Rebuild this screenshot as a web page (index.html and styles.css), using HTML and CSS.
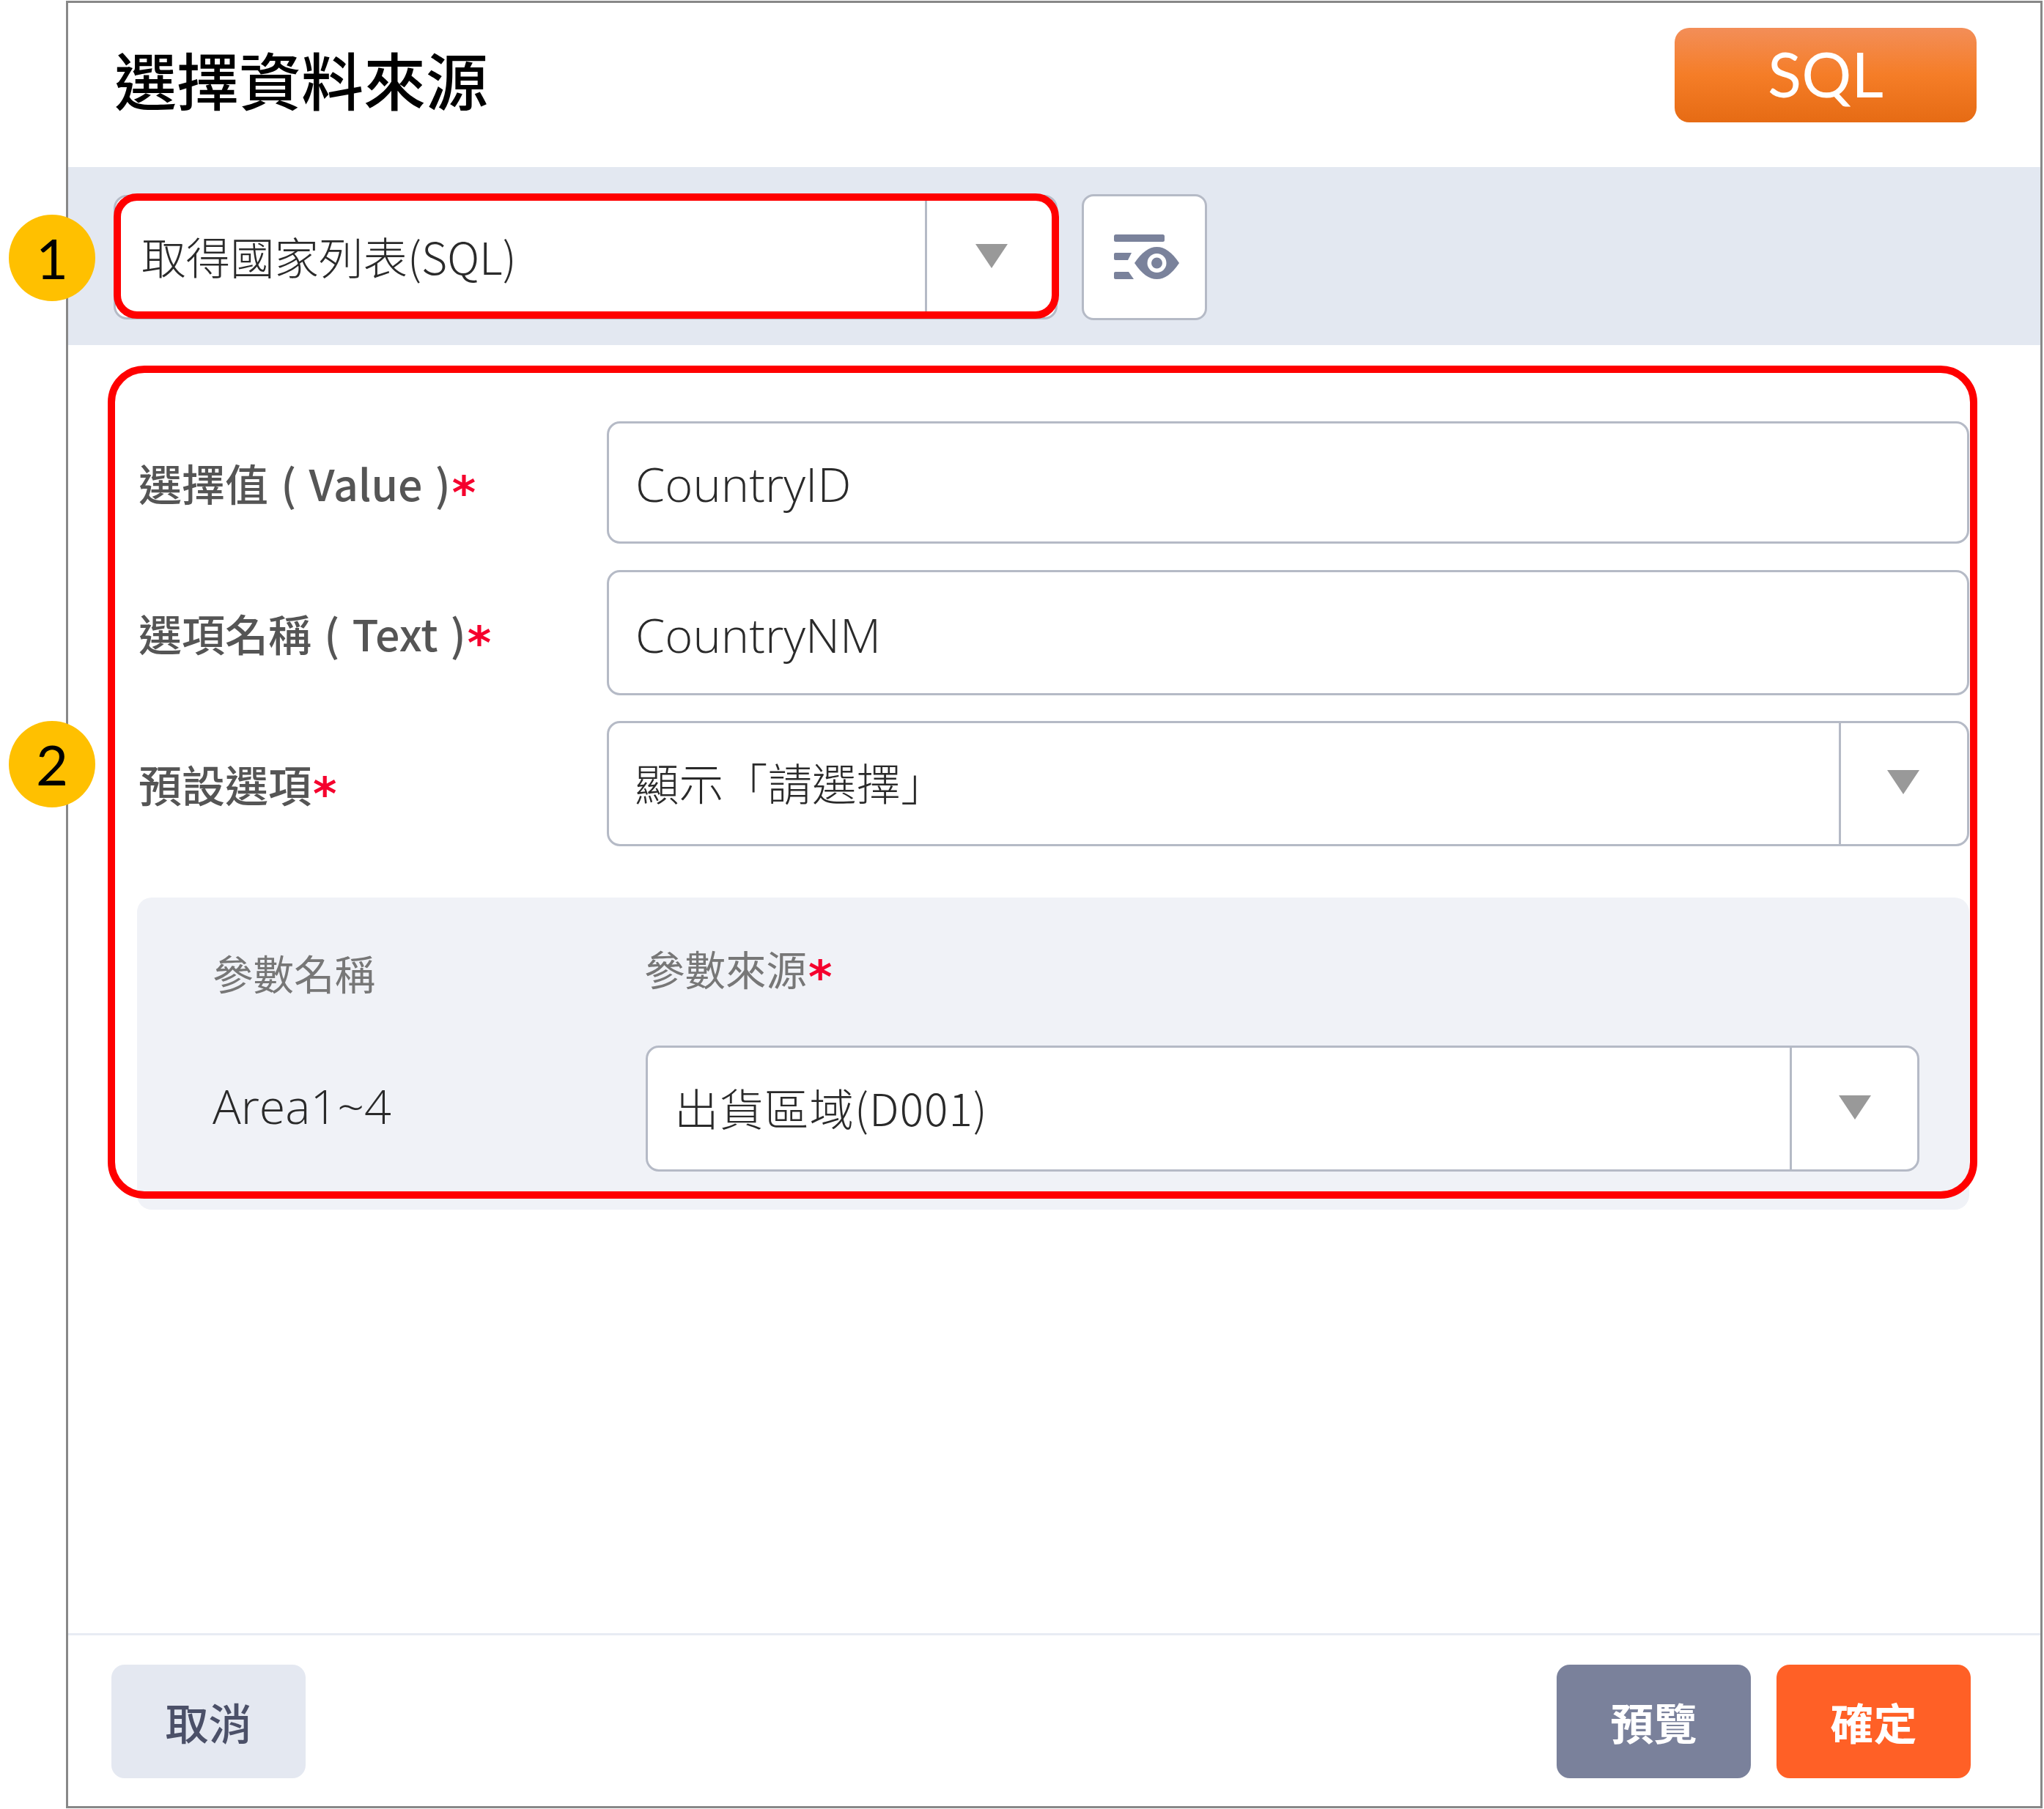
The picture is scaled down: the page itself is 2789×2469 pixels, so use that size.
FILE: index.html

```html
<!DOCTYPE html>
<html lang="zh-Hant">
<head>
    <meta charset="UTF-8">
    <meta name="viewport" content="width=device-width, initial-scale=1.0">
    <title>選擇資料來源</title>

    <link rel="stylesheet" href="styles.css">
</head>
<body>

    <div class="dialog">

        <div class="dialog-head">
            <h1 class="dialog-title">選擇資料來源</h1>
            <div class="sql-tag">SQL</div>
        </div>

        <div class="source-bar">
            <div class="select select-source">
                <span class="select-text">取得國家列表(SQL)</span>
                <span class="select-arrow"><i class="caret"></i></span>
            </div>
            <button class="eye-btn" type="button">
                <svg class="eye-icon" viewBox="0 0 89 61" width="89" height="61">
                    <rect x="0" y="0" width="69" height="10" rx="2.5" fill="#7a829b"/>
                    <path d="M2 25H24L19 35H2Q0 35 0 33V27Q0 25 2 25Z" fill="#7a829b"/>
                    <path d="M2 51H20L27 61H2Q0 61 0 59V53Q0 51 2 51Z" fill="#7a829b"/>
                    <path d="M28 39C38 24 48 17 58.5 17C69 17 79 24 89 39C79 54 69 61 58.5 61C48 61 38 54 28 39Z" fill="#7a829b"/>
                    <circle cx="58.5" cy="39" r="13" fill="#fff"/>
                    <circle cx="58.5" cy="39" r="7.5" fill="#7a829b"/>
                </svg>
            </button>
        </div>

        <div class="form">
            <div class="row row-first">
                <label class="row-label">選擇值 ( Value )<span class="req">*</span></label>
                <div class="input">CountryID</div>
            </div>
            <div class="row">
                <label class="row-label">選項名稱 ( Text )<span class="req">*</span></label>
                <div class="input input-text">CountryNM</div>
            </div>
            <div class="row">
                <label class="row-label">預設選項<span class="req">*</span></label>
                <div class="select select-default">
                    <span class="select-text">顯示「請選擇」</span>
                    <span class="select-arrow"><i class="caret"></i></span>
                </div>
            </div>

            <div class="params">
                <div class="param-name">參數名稱</div>
                <div class="param-source">參數來源<span class="req">*</span></div>
                <div class="param-value">Area1~4</div>
                <div class="select select-param">
                    <span class="select-text">出貨區域(D001)</span>
                    <span class="select-arrow"><i class="caret"></i></span>
                </div>
            </div>
        </div>

        <div class="dialog-foot">
            <button class="btn btn-cancel" type="button">取消</button>
            <div class="foot-right">
                <button class="btn btn-preview" type="button">預覽</button>
                <button class="btn btn-ok" type="button">確定</button>
            </div>
        </div>

        <!-- callouts drawn over the dialog -->
        <div class="mark mark-source"></div>
        <div class="mark mark-form"></div>
        <div class="badge badge-one">1</div>
        <div class="badge badge-two">2</div>
    </div>

</body>
</html>
```

FILE: styles.css

```css
body{
    margin: 0;
    background: #fff;
    font-family: "Noto Sans CJK TC", sans-serif;
    color: #444;
}

.dialog{
    position: relative;
    display: flex;
    flex-direction: column;
    box-sizing: border-box;
    width: 2697px;
    height: 2467px;
    margin: 1px 0 0 90px;
    border: 3px solid #888;
    background: #fff;
}

/* head */
.dialog-head{
    display: flex;
    justify-content: space-between;
    align-items: flex-start;
    box-sizing: border-box;
    height: 224px;
    padding: 34px 87px 0 63px;
}
.dialog-title{
    margin: 4px 0 0;
    font-size: 85px;
    line-height: 129px;
    font-weight: 500;
    color: #000;
}
.sql-tag{
    width: 412px;
    height: 129px;
    border-radius: 20px;
    background: linear-gradient(#f38e58, #f57d27 50%, #e66b14);
    color: #fff;
    font-family: Lato, sans-serif;
    font-size: 85px;
    line-height: 125px;
    text-align: center;
}

/* source bar */
.source-bar{
    display: flex;
    gap: 33px;
    box-sizing: border-box;
    height: 243px;
    padding: 38px 0 0 62px;
    background: #e3e8f1;
}
.eye-btn{
    display: flex;
    align-items: center;
    justify-content: center;
    box-sizing: border-box;
    width: 171px;
    height: 172px;
    margin-top: -1px;
    padding: 0 0 2px 5px;
    border: 3px solid #b5bac6;
    border-radius: 16px;
    background: #fff;
}

/* select + input */
.select{
    display: flex;
    box-sizing: border-box;
    border: 3px solid #b5bac6;
    border-radius: 18px;
    background: #fff;
}
.select-text{
    flex: 1;
    align-self: center;
    padding: 0 0 5px 35px;
    font-size: 60.5px;
    font-weight: 300;
    line-height: 80px;
    color: #2a2a2a;
}
.select-arrow{
    display: flex;
    align-items: center;
    justify-content: center;
    box-sizing: border-box;
    border-left: 3px solid #b5bac6;
}
.caret{
    display: block;
    margin-top: -4px;
    border-top: 33px solid #999;
    border-left: 22px solid transparent;
    border-right: 22px solid transparent;
}
.select-source{
    width: 1288px;
    height: 170px;
}
.select-source .select-arrow{
    width: 178px;
}
.select-default{
    flex: 1;
}
.select-default .select-arrow{
    width: 175px;
    padding-right: 3px;
}
.select-param{
    height: 172px;
}
.select-param .select-text{
    padding-left: 36px;
    letter-spacing: 1px;
}
.select-param .select-arrow{
    width: 174px;
}
.input{
    flex: 1;
    box-sizing: border-box;
    padding-left: 36px;
    border: 3px solid #b5bac6;
    border-radius: 18px;
    font-family: "Open Sans", "Noto Sans CJK TC", sans-serif;
    font-size: 65px;
    font-weight: 300;
    line-height: 164px;
    color: #2a2a2a;
}
.input-text{
    line-height: 170px;
}

/* form rows */
.form{
    padding: 104px 97px 0 96px;
}
.row{
    display: flex;
    height: 171px;
    margin-bottom: 35px;
}
.row-first{
    height: 167px;
    margin-bottom: 36px;
}
.row-label{
    display: block;
    width: 639px;
    align-self: center;
    font-size: 59px;
    font-weight: 500;
    word-spacing: 4px;
    color: #555;
}
.req{
    margin-left: 2px;
    font-family: "DejaVu Sans", sans-serif;
    font-size: 62px;
    font-weight: 700;
    line-height: 0;
    vertical-align: -10px;
    color: #f5002d;
}

/* params panel */
.params{
    display: grid;
    grid-template-columns: 591px 1fr;
    grid-template-rows: 202px 172px;
    box-sizing: border-box;
    height: 426px;
    margin: 70px 0 0 -2px;
    padding-left: 103px;
    padding-right: 68px;
    border-radius: 20px;
    background: #f0f2f7;
}
.param-name{
    padding-top: 66px;
    font-size: 55.5px;
    line-height: 72px;
    color: #777;
}
.param-source{
    padding-top: 60px;
    margin-left: -2px;
    font-size: 55.5px;
    line-height: 72px;
    color: #777;
}
.param-value{
    align-self: center;
    padding-bottom: 8px;
    font-family: "Open Sans", sans-serif;
    font-size: 64.5px;
    font-weight: 300;
    color: #2a2a2a;
}

/* footer */
.dialog-foot{
    display: flex;
    justify-content: space-between;
    box-sizing: border-box;
    margin-top: auto;
    height: 236px;
    padding: 40px 95px 0 59px;
    border-top: 3px solid #e8ebf3;
}
.foot-right{
    display: flex;
    gap: 35px;
}
.btn{
    width: 265px;
    height: 155px;
    border: 0;
    border-radius: 18px;
    font-family: "Noto Sans CJK TC", sans-serif;
    font-size: 59px;
}
.btn-cancel{
    background: #e4e8f1;
    color: #4b5068;
    font-weight: 500;
}
.btn-preview{
    background: #7a819b;
    color: #fff;
    font-weight: 700;
}
.btn-ok{
    background: #ff6026;
    color: #fff;
    font-weight: 700;
}

/* callouts */
.mark{
    position: absolute;
    box-sizing: border-box;
    border: 10px solid #f00;
}
.mark-source{
    left: 62px;
    top: 260px;
    width: 1290px;
    height: 171px;
    border-radius: 32px;
}
.mark-form{
    left: 54px;
    top: 495px;
    width: 2551px;
    height: 1137px;
    border-radius: 50px;
}
.badge{
    position: absolute;
    left: -81px;
    width: 118px;
    height: 118px;
    border-radius: 50%;
    background: #ffc000;
    color: #000;
    font-family: Lato, sans-serif;
    font-size: 76px;
    line-height: 117px;
    text-align: center;
}
.badge-one{
    top: 289px;
}
.badge-two{
    top: 980px;
}
```
